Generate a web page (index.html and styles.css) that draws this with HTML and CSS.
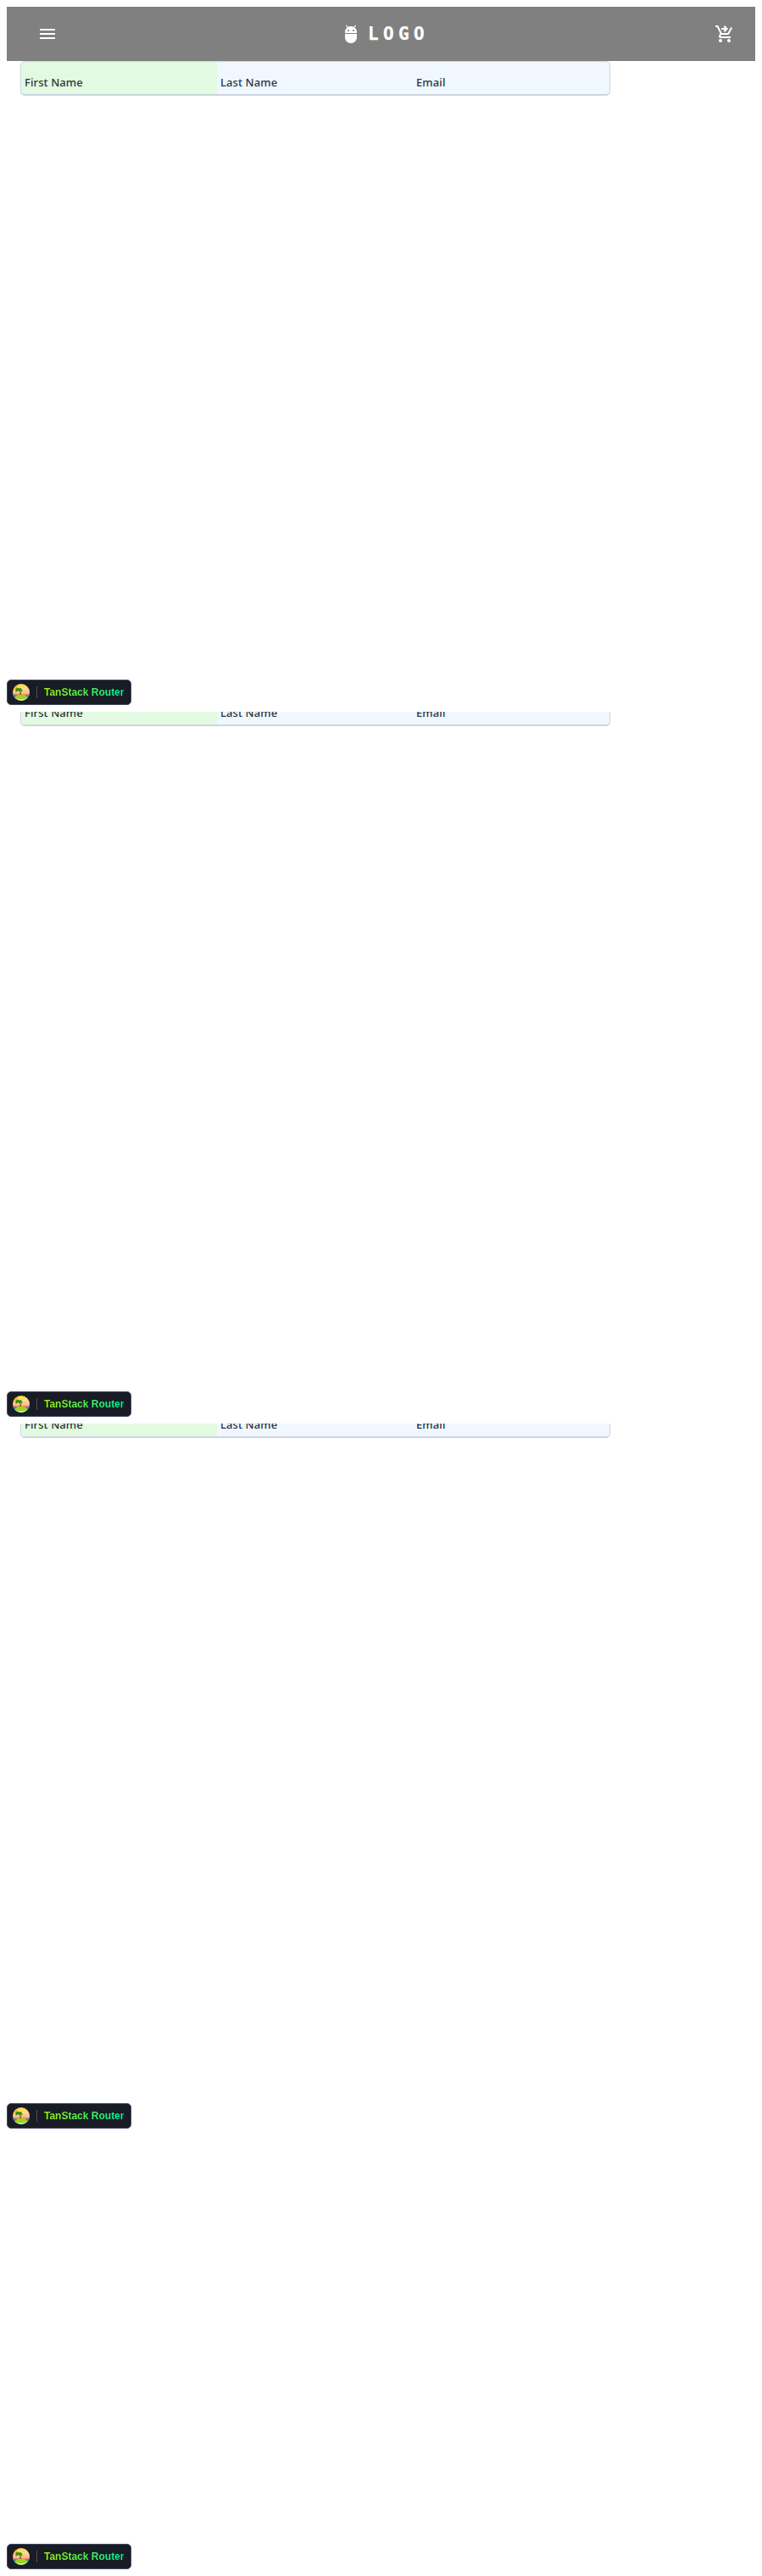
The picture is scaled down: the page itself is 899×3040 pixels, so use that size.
FILE: index.html
```html
<!DOCTYPE html>
<html lang="en">
<head>
<meta charset="utf-8">
<title>Logo</title>
<link rel="stylesheet" href="styles.css">
</head>
<body>
<svg class="defs" width="0" height="0" aria-hidden="true">
  <defs>
    <linearGradient id="sky" x1="0" y1="0" x2="0" y2="1"><stop offset="0" stop-color="#f7d84a"/><stop offset=".35" stop-color="#fbe08a"/><stop offset=".65" stop-color="#fba886"/><stop offset="1" stop-color="#f9a37c"/></linearGradient>
    <clipPath id="disc"><circle cx="10" cy="10" r="10"/></clipPath>
    <symbol id="island" viewBox="0 0 20 20">
      <g clip-path="url(#disc)">
        <rect width="20" height="20" fill="url(#sky)"/>
        <circle cx="3.4" cy="4.6" r="2.5" fill="#ffb51c"/>
        <path d="M11 7h9v2h-9z" fill="#fcc5a0"/>
        <rect y="13" width="20" height="7" fill="#16a8a4"/>
        <path d="M0 12.400h20v1H0z" fill="#d8538a"/>
        <path d="M2 17.500Q4 12.200 10 12.200t8 5.300z" fill="#a8cf12"/>
        <path d="M1 16.500q9 2.600 18 0V20H1z" fill="#d9ed70"/>
        <path d="M7.200 6.500q1.800 3 1 6.500h1.600q.6-4-1.300-6.800z" fill="#8c4a17"/>
        <path d="M7.500 5.500Q4.500 3.500 3.200 7.500q0 1.500.8 2.300Q5 8.500 6.500 8.300q1.500 1 3-.2 1.200.6 1.500 1.800 1-2-.3-3.300Q10 4 7.500 5.500z" fill="#318c12"/>
      </g>
    </symbol>
  </defs>
</svg>

<section class="screen">
  <header class="appbar">
    <svg class="icon" viewBox="0 0 24 24"><path d="M3 18h18v-2H3v2zm0-5h18v-2H3v2zm0-7v2h18V6H3z"/></svg>
    <div class="brand">
      <svg class="icon" viewBox="0 0 24 24"><path d="M5 16c0 3.870 3.130 7 7 7s7-3.130 7-7v-4H5v4zM16.120 4.370l2.100-2.100-.82-.83-2.300 2.310C14.160 3.280 13.120 3 12 3s-2.160.28-3.090.75L6.600 1.440l-.82.83 2.100 2.100C6.140 5.640 5 7.680 5 10v1h14v-1c0-2.320-1.140-4.360-2.880-5.630zM9 9c-.55 0-1-.45-1-1s.45-1 1-1 1 .45 1 1-.45 1-1 1zm6 0c-.55 0-1-.45-1-1s.45-1 1-1 1 .45 1 1-.45 1-1 1z"/></svg>
      <span class="logo">LOGO</span>
    </div>
    <svg class="icon" viewBox="0 0 24 24"><path d="M7 18c-1.100 0-1.990.9-1.990 2S5.900 22 7 22s2-.9 2-2-.9-2-2-2zm10 0c-1.100 0-1.990.9-1.990 2s.89 2 1.990 2 2-.9 2-2-.9-2-2-2zM8.100 13h7.450c.75 0 1.410-.41 1.750-1.030L21 4.960 19.250 4l-3.700 7H8.530L4.270 2H1v2h2l3.600 7.590-1.350 2.440C4.520 15.370 5.480 17 7 17h12v-2H7l1.100-2zM12 2l4 4-4 4-1.410-1.410L12.170 7H8V5h4.170l-1.590-1.590L12 2z"/></svg>
  </header>
  <div class="table"><div class="cell cell-first">First Name</div><div class="cell">Last Name</div><div class="cell">Email</div></div>
  <div class="badge"><svg class="island"><use href="#island"/></svg><span class="rule"></span><span class="badge-text">TanStack Router</span></div>
</section>

<section class="screen screen-scrolled">
  <div class="table"><div class="cell cell-first">First Name</div><div class="cell">Last Name</div><div class="cell">Email</div></div>
  <div class="badge"><svg class="island"><use href="#island"/></svg><span class="rule"></span><span class="badge-text">TanStack Router</span></div>
</section>

<section class="screen screen-scrolled">
  <div class="table"><div class="cell cell-first">First Name</div><div class="cell">Last Name</div><div class="cell">Email</div></div>
  <div class="badge"><svg class="island"><use href="#island"/></svg><span class="rule"></span><span class="badge-text">TanStack Router</span></div>
</section>

<section class="screen screen-last">
  <div class="badge"><svg class="island"><use href="#island"/></svg><span class="rule"></span><span class="badge-text">TanStack Router</span></div>
</section>
</body>
</html>
```
FILE: styles.css
```css
* { box-sizing: border-box; }
body { margin: 0; background: #fff; font-family: "Noto Sans", sans-serif; }
.defs { display: block; }
.screen { display: flex; flex-direction: column; height: 840px; padding: 8px; overflow: hidden; }
.screen-scrolled { padding-top: 0; }
.screen-scrolled .table { margin-top: -24px; }
.screen-last { height: 520px; }
.appbar { display: flex; flex: none; align-items: center; justify-content: space-between; height: 64px; padding: 0 24px 0 36px; background: #808080; color: #fff; }
.icon { display: block; flex: none; width: 24px; height: 24px; fill: currentColor; }
.brand { display: flex; align-items: center; gap: 8px; margin-right: 3px; }
.logo { font: 700 21px/32px monospace; letter-spacing: 5.4px; -webkit-text-stroke: 0.25px #fff; }
.table { display: grid; flex: none; grid-template-columns: 231px 231px 1fr; width: 696px; height: 41px; margin-left: 16px; border: 1px solid #cbd5e1; border-bottom-width: 2px; border-radius: 5px; background: #f0f7ff; overflow: hidden; }
.cell { padding: 14px 4px 0; font-size: 13px; font-weight: 500; line-height: 20px; letter-spacing: 0.1px; color: #2e3440; }
.cell-first { background: #e2fae1; }
.badge { display: flex; flex: none; align-items: center; width: 147px; height: 30px; margin-top: auto; padding: 0 6px; border: 1px solid #414962; border-radius: 5px; background: #191c24; }
.island { display: block; flex: none; width: 20px; height: 20px; }
.rule { flex: none; width: 1px; height: 14px; margin: 0 8px; background: #475467; }
.badge-text { font: 600 12px/16px "Liberation Sans", sans-serif; white-space: nowrap; color: transparent; background: linear-gradient(to right, #98f30c, #00f4a3); background-clip: text; -webkit-background-clip: text; }
```
